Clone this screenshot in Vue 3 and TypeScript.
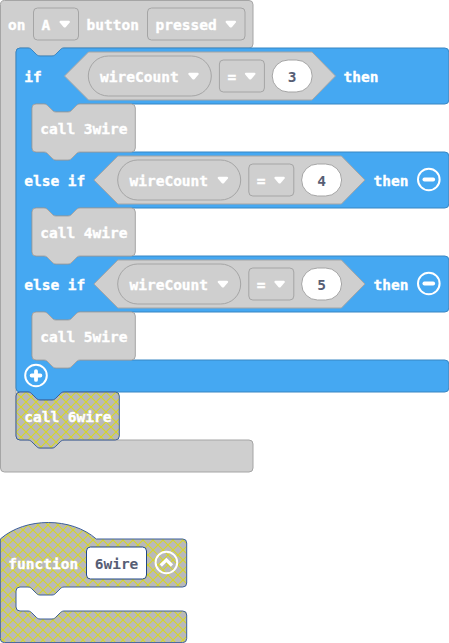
<script setup lang="ts">
interface Label { x: number; y: number; text: string; dark?: boolean }
interface Condition { shift: number; top: number; value: string }

const notchRight = 'c2,0 3,1 4,2 l4,4 c1,1 2,2 4,2 h12 c2,0 3,-1 4,-2 l4,-4 c1,-1 2,-2 4,-2'
const notchLeft = 'c-2,0 -3,1 -4,2 l-4,4 c-1,1 -2,2 -4,2 h-12 c-2,0 -3,-1 -4,-2 l-4,-4 c-1,-1 -2,-2 -4,-2'

// Statement slot: runs from the right end of one arm to the right end of the next.
const slot = (x: number, top: number, bottom: number, right: number): string =>
  `V${top - 4} a4,4 0 0 1 -4,4 H${x + 48} ${notchLeft} h-8 a4,4 0 0 0 -4,4 V${bottom - 4} ` +
  `a4,4 0 0 0 4,4 h8 ${notchRight} H${right - 4} a4,4 0 0 1 4,4`

const statement = (x: number, y: number, w: number): string =>
  `M${x},${y + 4} a4,4 0 0 1 4,-4 h8 ${notchRight} H${x + w - 4} a4,4 0 0 1 4,4 v40 a4,4 0 0 1 -4,4 ` +
  `H${x + 48} ${notchLeft} h-8 a4,4 0 0 1 -4,-4 z`

const eventPath = `M0.5,4.5 a4,4 0 0 1 4,-4 H249 a4,4 0 0 1 4,4 ${slot(16, 48, 440, 253)} V468 a4,4 0 0 1 -4,4 H4.5 a4,4 0 0 1 -4,-4 z`
const ifPath =
  `M16,52 a4,4 0 0 1 4,-4 h8 ${notchRight} H444.8 a4,4 0 0 1 4,4 ` +
  `${slot(32, 104, 152, 448.8)} ${slot(32, 208, 256, 448.8)} ${slot(32, 312, 360, 448.8)} ` +
  `V388 a4,4 0 0 1 -4,4 H64 ${notchLeft} h-8 a4,4 0 0 1 -4,-4 z`
const functionPath = `M0.3,539 c25,-22 71,-22 96,0 H182.7 a4,4 0 0 1 4,4 ${slot(16, 587, 611, 186.7)} V638.6 a4,4 0 0 1 -4,4 H4.3 a4,4 0 0 1 -4,-4 z`

const calls = [
  { y: 104, name: '3wire' },
  { y: 208, name: '4wire' },
  { y: 312, name: '5wire' },
]
const conditions: Condition[] = [
  { shift: 0, top: 52, value: '3' },
  { shift: 29.4, top: 156, value: '4' },
  { shift: 29.4, top: 260, value: '5' },
]
const labels: Label[] = [
  { x: 8, y: 30, text: 'on' },
  { x: 41.5, y: 30, text: 'A' },
  { x: 86.5, y: 30, text: 'button' },
  { x: 155.5, y: 30, text: 'pressed' },
  { x: 24.2, y: 82, text: 'if' },
  { x: 343.5, y: 82, text: 'then' },
  { x: 24.2, y: 186, text: 'else if' },
  { x: 373.5, y: 186, text: 'then' },
  { x: 24.2, y: 290, text: 'else if' },
  { x: 373.5, y: 290, text: 'then' },
  { x: 24.2, y: 422, text: 'call 6wire' },
  { x: 8.3, y: 569, text: 'function' },
  { x: 94.7, y: 569, text: '6wire', dark: true },
]
const arrow = 'M-4.3,-3.5 H4.3 Q5.9,-3.1 5,-1.6 L1.2,2.7 Q0,3.9 -1.2,2.7 L-5,-1.6 Q-5.9,-3.1 -4.3,-3.5 z'
</script>

<template>
  <main class="workspace">
    <svg class="canvas" width="449" height="643" viewBox="0 0 449 643">
      <defs>
        <pattern id="disabled" width="10" height="10" patternUnits="userSpaceOnUse" patternTransform="translate(3 0)">
          <rect width="10" height="10" fill="#b9b9b9" />
          <path d="M-1,-1 L11,11 M11,-1 L-1,11" stroke="#d6d626" stroke-width="1.15" />
        </pattern>
        <pattern id="disabledCall" width="10" height="10" patternUnits="userSpaceOnUse" patternTransform="translate(16 392)">
          <rect width="10" height="10" fill="#b9b9b9" />
          <path d="M-1,-1 L11,11 M11,-1 L-1,11" stroke="#d6d626" stroke-width="1.15" />
        </pattern>
      </defs>

      <path class="gray" :d="eventPath" />
      <rect class="gray" x="33.5" y="8" width="45" height="32" rx="4" />
      <rect class="gray" x="147.5" y="8" width="97.5" height="32" rx="4" />
      <path class="arrow" :d="arrow" transform="translate(64.7 24.2)" />
      <path class="arrow" :d="arrow" transform="translate(230.8 24.2)" />

      <path class="logic" :d="ifPath" />
      <g v-for="c in conditions" :key="c.value" :transform="`translate(${c.shift} ${c.top})`">
        <path class="gray" d="M64.5,24 L88.5,0 H312 L335.5,24 L312,48 H88.5 z" />
        <rect class="gray" x="88.3" y="4" width="123" height="40" rx="20" />
        <text class="label" x="100.1" y="30">wireCount</text>
        <path class="arrow" :d="arrow" transform="translate(193.5 24.2)" />
        <rect class="gray" x="219.4" y="8" width="45" height="32" rx="4" />
        <text class="label" x="227.4" y="30">=</text>
        <path class="arrow" :d="arrow" transform="translate(250.2 24.2)" />
        <rect class="number" x="272.2" y="8" width="40" height="32" rx="16" />
        <text class="label dark" x="287.8" y="30">{{ c.value }}</text>
      </g>

      <g v-for="c in calls" :key="c.name">
        <path class="gray" :d="statement(32, c.y, 103.3)" />
        <text class="label" x="40.2" :y="c.y + 30">call {{ c.name }}</text>
      </g>

      <path class="disabled call" :d="statement(16, 392, 103.3)" />
      <path class="disabled" :d="functionPath" />
      <rect class="name" x="86.5" y="547" width="60" height="32" rx="4" />

      <g class="icon" transform="translate(428.8 179.5)"><circle r="10.8" /><path class="bar" d="M-4.4,0 H4.4" /></g>
      <g class="icon" transform="translate(428.8 283.5)"><circle r="10.8" /><path class="bar" d="M-4.4,0 H4.4" /></g>
      <g class="icon" transform="translate(36 375.5)"><circle r="10.8" /><path class="bar" d="M-4.4,0 H4.4 M0,-4.4 V4.4" /></g>
      <g class="icon" transform="translate(166.4 562.5)"><circle r="10.8" /><path class="chevron" d="M-5.6,3 L0,-2.6 L5.6,3" /></g>

      <text v-for="(l, i) in labels" :key="i" class="label" :class="{ dark: l.dark }" :x="l.x" :y="l.y">{{ l.text }}</text>
    </svg>
  </main>
</template>

<style>
body { background: #fff; }
</style>

<style scoped>
.workspace { width: 449px; height: 643px; overflow: hidden; }
.canvas { display: block; }
.gray { fill: #cfcfcf; stroke: #a5a5a5; }
.logic { fill: #45a8f2; stroke: #3986c2; }
.number { fill: #fff; stroke: #a5a5a5; }
.name { fill: #fff; stroke: #1f4788; }
.disabled { fill: url(#disabled); stroke: #3c5f9c; }
.disabled.call { fill: url(#disabledCall); }
.arrow { fill: #fff; }
.label {
  font-family: "DejaVu Sans Mono", monospace;
  font-size: 14.5px;
  font-weight: 700;
  fill: #fff;
  stroke: #fff;
  stroke-width: 0.35px;
  white-space: pre;
}
.label.dark { fill: #575e75; stroke: none; }
.icon { fill: none; stroke: #fff; stroke-width: 2; }
.icon .bar { stroke-width: 3.8; stroke-linecap: round; }
.icon .chevron { stroke-width: 3.2; }
</style>
